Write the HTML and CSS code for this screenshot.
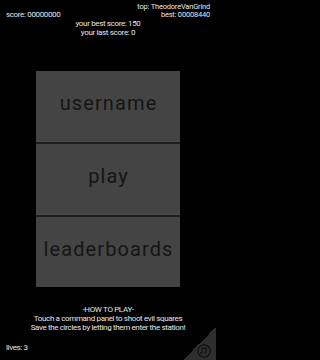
FILE: index.html
```html
<!DOCTYPE html>
<html>
<head>
<meta charset="utf-8">
<link rel="stylesheet" href="styles.css">
</head>
<body>
<div class="screen">
  <header class="hud">
    <div class="score">score: 00000000</div>
    <div class="records">
      <div>top: TheodoreVanGrind</div>
      <div>best: 00008440</div>
    </div>
  </header>
  <div class="personal">
    <div>your best score: 150</div>
    <div>your last score: 0</div>
  </div>
  <nav class="menu">
    <div class="panel p1">username</div>
    <div class="panel p2">play</div>
    <div class="panel p3">leaderboards</div>
  </nav>
  <div class="howto">
    <div>-HOW TO PLAY-</div>
    <div>Touch a command panel to shoot evil squares</div>
    <div>Save the circles by letting them enter the station!</div>
  </div>
  <div class="lives">lives: 3</div>
  <div class="sound">
    <svg class="sound-icon" viewBox="0 0 14 14" width="14" height="14">
      <circle cx="7" cy="7" r="6.2" fill="none" stroke="#121212" stroke-width="1.3"/>
      <path d="M4.6 4.6 L9.6 3.9" stroke="#121212" stroke-width="1.4" fill="none"/>
      <path d="M5.2 4.6 V8.6 M9.2 4 V8" stroke="#121212" stroke-width="1" fill="none"/>
      <ellipse cx="4.3" cy="8.9" rx="1.2" ry="0.9" fill="#121212"/>
      <ellipse cx="8.3" cy="8.3" rx="1.2" ry="0.9" fill="#121212"/>
    </svg>
  </div>
</div>
</body>
</html>
```
FILE: styles.css
```css
html, body {
  margin: 0;
  padding: 0;
  background: #000;
}
.screen {
  position: relative;
  width: 216px;
  height: 360px;
  overflow: hidden;
  background: #000;
  color: #e6e6e6;
  font-family: Roboto, "Noto Sans", sans-serif;
  font-size: 8px;
  letter-spacing: -0.35px;
}
.hud {
  display: flex;
  justify-content: space-between;
  align-items: flex-end;
  padding: 3px 6px 0 6px;
  line-height: 7.5px;
}
.records {
  text-align: right;
  font-size: 7.5px;
  letter-spacing: -0.2px;
}
.personal {
  margin-top: 1px;
  text-align: center;
  line-height: 9px;
}
.menu {
  width: 144px;
  margin: 34px auto 0 auto;
  display: flex;
  flex-direction: column;
  gap: 2px;
  background: #1e1e1e;
}
.panel {
  background: #444444;
  display: flex;
  align-items: center;
  justify-content: center;
  padding-bottom: 7px;
  box-sizing: border-box;
  color: #151515;
  font-size: 20px;
  letter-spacing: 1.1px;
  text-indent: 1.1px;
}
.p1, .p2 {
  height: 71px;
  border-bottom: 1px solid #4b4b4b;
}
.p3 {
  height: 70px;
}
.howto {
  margin-top: 18px;
  text-align: center;
  line-height: 9px;
}
.lives {
  margin-top: 11px;
  padding-left: 6px;
  line-height: 9px;
}
.sound {
  position: absolute;
  right: 0;
  bottom: 0;
  width: 33px;
  height: 33px;
  background: linear-gradient(to top left, #2e2e2e 50%, transparent 50%);
}
.sound-icon {
  position: absolute;
  left: 14px;
  top: 17px;
}
```
